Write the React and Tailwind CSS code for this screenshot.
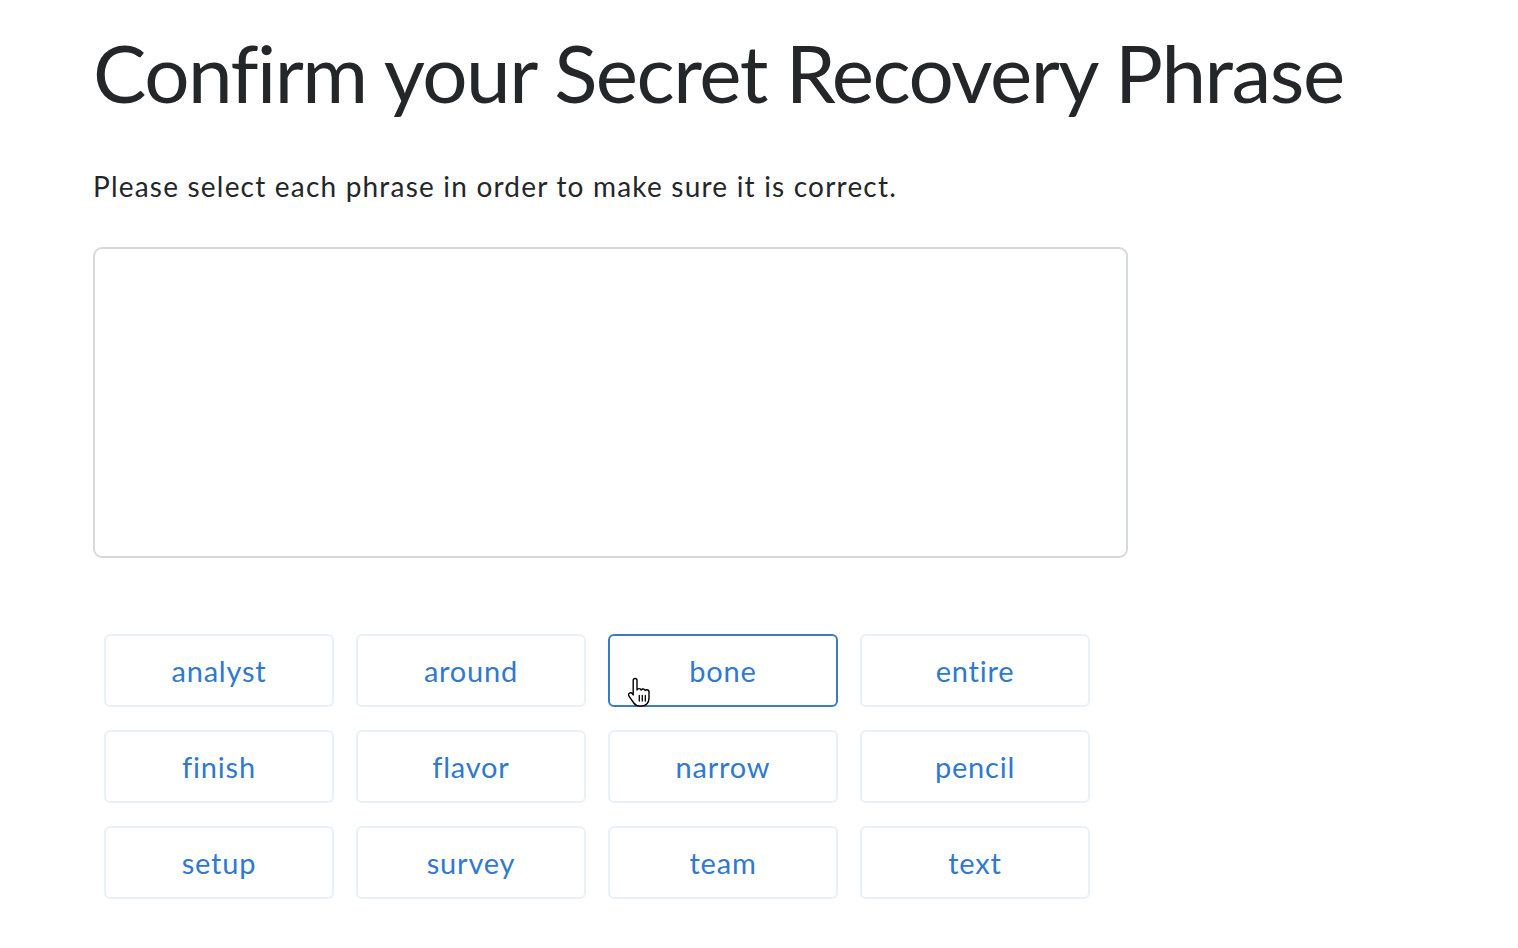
import React, { useState } from "react";

const WORDS = [
  "analyst", "around", "bone", "entire",
  "finish", "flavor", "narrow", "pencil",
  "setup", "survey", "team", "text",
];

const HandCursor = () => (
  <svg width="26" height="32" viewBox="0 0 26 32" className="absolute left-[18px] top-[40px] pointer-events-none">
    <path
      d="M7 2.5c1.2 0 2 .9 2 2v9.5c.4-.9 1.2-1.4 2.1-1.4 1 0 1.8.6 2 1.5.4-.7 1.1-1.1 2-1.1 1 0 1.8.6 2.1 1.5.4-.5 1-.8 1.7-.8 1.2 0 2.1 1 2.1 2.2v6.3c0 4.3-3 7.8-7.3 7.8h-2.2c-2.4 0-4.4-1.1-5.7-3l-4.8-6.8c-.7-1-.5-2.3.4-3 .9-.7 2.1-.5 2.8.4l1 1.3V4.5c0-1.1.8-2 1.8-2z"
      fill="#fff"
      stroke="#000"
      strokeWidth="1.4"
      strokeLinejoin="round"
    />
    <path d="M11.3 19.5v5.5M14.3 19.5v5.5M17.3 19.5v5.5" stroke="#000" strokeWidth="1.3" strokeLinecap="round" />
  </svg>
);

export default function App() {
  const [selected, setSelected] = useState("bone");

  return (
    <div className="min-h-[948px] w-full bg-white font-['Lato','Noto_Sans',sans-serif] text-[#24272a]">
      <div className="pl-[93px] pt-[24px]">
        {/* Title */}
        <h1 className="text-[80px] leading-[96px] font-normal tracking-[-1.5px]">
          Confirm your Secret Recovery Phrase
        </h1>

        {/* Description */}
        <p className="mt-[48px] text-[28px] leading-[36px] tracking-[1.2px]">
          Please select each phrase in order to make sure it is correct.
        </p>

        {/* Drop area */}
        <div className="mt-[43px] w-[1035px] h-[311px] border-2 border-[#d6d9dc] rounded-[9px]" />

        {/* Word buttons */}
        <div className="mt-[76px] ml-[11px] grid grid-cols-[repeat(4,230px)] gap-x-[22px] gap-y-[23px]">
          {WORDS.map((w) => (
            <button
              key={w}
              onClick={() => setSelected(w)}
              className={
                "relative h-[73px] rounded-[6px] border-2 bg-white text-[29px] tracking-[0.8px] text-[#3079cf] " +
                (selected === w ? "border-[#3b7bc6]" : "border-[#eaf0f8]")
              }
            >
              {w}
              {w === "bone" && <HandCursor />}
            </button>
          ))}
        </div>
      </div>
    </div>
  );
}
